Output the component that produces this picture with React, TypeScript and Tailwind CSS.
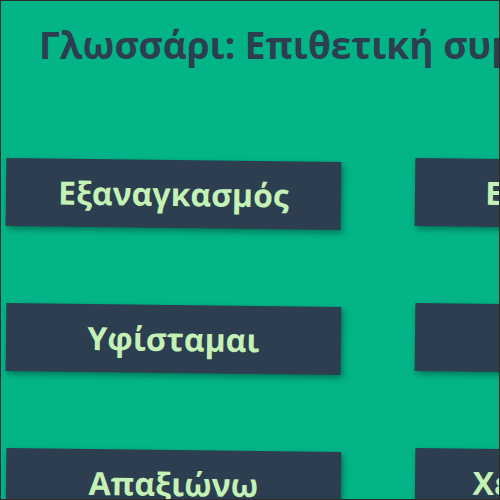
import React from "react";

const rows: [string, string][] = [
  ["Εξαναγκασμός", "Εκφοβισμός"],
  ["Υφίσταμαι", "Απειλή"],
  ["Απαξιώνω", "Χειραγώγηση"],
];

function Card({ label }: { label: string }) {
  return (
    <div className="w-[335px] h-[68px] shrink-0 bg-[#2c3e50] rotate-[0.7deg] shadow-[2px_3px_6px_rgba(0,0,0,0.35)] flex items-center justify-center">
      <span className="text-[32px] font-bold text-[#c4f1b5] leading-none whitespace-nowrap">{label}</span>
    </div>
  );
}

export default function App() {
  return (
    <div
      className="w-[500px] h-[500px] overflow-hidden bg-[#03b487] border border-[#2b2b2b]"
      style={{ fontFamily: '"Open Sans", "Noto Sans", sans-serif' }}
    >
      <h1 className="pl-[38px] pt-[25px] text-[37px] font-bold text-[#2c3e50] whitespace-nowrap leading-none">
        Γλωσσάρι: Επιθετική συμπεριφορά
      </h1>
      <div className="mt-[97px] pl-[5px] flex flex-col gap-[77px]">
        {rows.map(([a, b], i) => (
          <div key={i} className="flex gap-[74px]">
            <Card label={a} />
            <Card label={b} />
          </div>
        ))}
      </div>
    </div>
  );
}
